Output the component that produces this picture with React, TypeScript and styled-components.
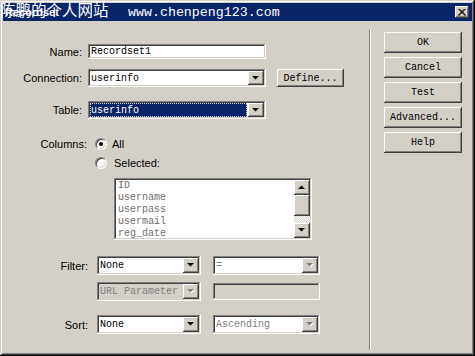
import React from 'react';
import styled, { createGlobalStyle } from 'styled-components';

const GlobalStyle = createGlobalStyle`
  html, body {
    margin: 0;
    padding: 0;
    background: #d4d0c8;
  }
  body {
    width: 475px;
    height: 356px;
    overflow: hidden;
  }
`;

const raised = `
  box-shadow: inset -1px -1px #404040, inset 1px 1px #ffffff,
    inset -2px -2px #808080, inset 2px 2px #d4d0c8;
`;

const sunken = `
  box-shadow: inset -1px -1px #ffffff, inset 1px 1px #808080,
    inset -2px -2px #d4d0c8, inset 2px 2px #404040;
`;

const mono = `"Liberation Mono", "Courier New", monospace`;

const Window = styled.div`
  position: relative;
  box-sizing: border-box;
  width: 475px;
  height: 356px;
  padding: 3px;
  display: flex;
  flex-direction: column;
  background: #d4d0c8;
  box-shadow: inset -1px -1px #000000, inset 1px 1px #d4d0c8,
    inset -2px -2px #404040, inset 2px 2px #ffffff, inset -3px -3px #808080;
  font-family: "Liberation Sans", Arial, sans-serif;
  font-size: 11px;
  color: #000;
`;

const TitleBar = styled.div`
  height: 18px;
  flex-shrink: 0;
  display: flex;
  align-items: center;
  justify-content: space-between;
  padding: 0 3px 0 2px;
  background: #0a246a;
  color: #fff;
  font-weight: 700;
  font-size: 11px;
`;

const Watermark = styled.div`
  position: absolute;
  top: 0;
  left: 0;
  height: 19px;
  color: #fff;
  white-space: pre;
  display: flex;
  align-items: baseline;
  pointer-events: none;
`;

const WatermarkCn = styled.span`
  font-family: "Noto Sans CJK SC", sans-serif;
  font-size: 15.5px;
  line-height: 18px;
  width: 128px;
`;

const WatermarkUrl = styled.span`
  font-family: ${mono};
  font-size: 13.3px;
  line-height: 18px;
`;

const CloseButton = styled.div`
  width: 14px;
  height: 12px;
  background: #d4d0c8;
  display: flex;
  align-items: center;
  justify-content: center;
  ${raised}
`;

const Content = styled.div`
  flex: 1;
  display: flex;
`;

const FormPanel = styled.div`
  width: 366px;
  display: flex;
  flex-direction: column;
`;

const Separator = styled.div`
  width: 0;
  margin: 9px 0 3px;
  border-left: 1px solid #808080;
  border-right: 1px solid #ffffff;
`;

const ButtonPanel = styled.div`
  flex: 1;
  display: flex;
  flex-direction: column;
  gap: 4px;
  padding: 11px 0 0 13px;
`;

const PushButton = styled.div<{ $w?: number; $h?: number }>`
  box-sizing: border-box;
  width: ${(p) => p.$w ?? 78}px;
  height: ${(p) => p.$h ?? 21}px;
  flex-shrink: 0;
  display: flex;
  align-items: center;
  justify-content: center;
  background: #d4d0c8;
  font-family: ${mono};
  font-size: 10px;
  ${raised}
`;

const Row = styled.div<{ $top: number; $h: number }>`
  display: flex;
  align-items: center;
  margin-top: ${(p) => p.$top}px;
  height: ${(p) => p.$h}px;
  flex-shrink: 0;
`;

const Label = styled.div<{ $w: number; $gap: number }>`
  width: ${(p) => p.$w}px;
  margin-right: ${(p) => p.$gap}px;
  flex-shrink: 0;
  text-align: right;
`;

const Field = styled.div<{ $w: number; $disabled?: boolean }>`
  box-sizing: border-box;
  width: ${(p) => p.$w}px;
  height: 100%;
  flex-shrink: 0;
  display: flex;
  padding: 2px;
  background: ${(p) => (p.$disabled ? '#d4d0c8' : '#ffffff')};
  ${sunken}
`;

const Value = styled.div<{ $muted?: boolean; $selected?: boolean }>`
  flex: 1;
  display: flex;
  align-items: center;
  padding-left: 1px;
  margin-right: ${(p) => (p.$selected ? 1 : 0)}px;
  font-family: ${mono};
  font-size: 10px;
  white-space: pre;
  color: ${(p) => (p.$selected ? '#ffffff' : p.$muted ? '#808080' : '#000000')};
  background: ${(p) => (p.$selected ? '#0a246a' : 'transparent')};
  outline: ${(p) => (p.$selected ? '1px dotted #d4d0c8' : 'none')};
  outline-offset: -1px;
`;

const ArrowBox = styled.div<{ $h?: number }>`
  box-sizing: border-box;
  width: 16px;
  height: ${(p) => (p.$h ? `${p.$h}px` : 'auto')};
  flex-shrink: 0;
  display: flex;
  align-items: center;
  justify-content: center;
  background: #d4d0c8;
  ${raised}
`;

const Spacer = styled.div<{ $w: number }>`
  width: ${(p) => p.$w}px;
  flex-shrink: 0;
`;

const RadioCircle = styled.div<{ $checked?: boolean }>`
  box-sizing: border-box;
  width: 12px;
  height: 12px;
  flex-shrink: 0;
  border-radius: 50%;
  border: 1px solid;
  border-color: #808080 #ffffff #ffffff #808080;
  background: #ffffff;
  box-shadow: inset 1px 1px #404040, inset -1px -1px #d4d0c8;
  display: flex;
  align-items: center;
  justify-content: center;

  &::after {
    content: '';
    display: ${(p) => (p.$checked ? 'block' : 'none')};
    width: 4px;
    height: 4px;
    border-radius: 50%;
    background: #000;
  }
`;

const RadioText = styled.span<{ $gap: number }>`
  margin-left: ${(p) => p.$gap}px;
`;

const ListBox = styled.div`
  box-sizing: border-box;
  margin-left: 111px;
  width: 198px;
  height: 100%;
  display: flex;
  padding: 2px;
  background: #ffffff;
  ${sunken}
`;

const ListItems = styled.div`
  flex: 1;
  padding-left: 2px;
  overflow: hidden;
  font-family: ${mono};
  font-size: 10px;
  color: #707070;
`;

const ListItem = styled.div`
  height: 12px;
  line-height: 12px;
`;

const ScrollBar = styled.div`
  width: 16px;
  display: flex;
  flex-direction: column;
`;

const ScrollThumb = styled.div`
  height: 21px;
  background: #d4d0c8;
  ${raised}
`;

const ScrollTrack = styled.div`
  flex: 1;
  background-color: #ffffff;
  background-image: linear-gradient(45deg, #d4d0c8 25%, transparent 25%, transparent 75%, #d4d0c8 75%),
    linear-gradient(45deg, #d4d0c8 25%, transparent 25%, transparent 75%, #d4d0c8 75%);
  background-size: 2px 2px;
  background-position: 0 0, 1px 1px;
`;

const Arrow = ({ up, disabled }: { up?: boolean; disabled?: boolean }) => (
  <svg width="8" height="5" viewBox="0 0 8 5">
    {disabled && <polygon points={up ? '1,5 8,5 4.5,1.5' : '1,1 8,1 4.5,4.5'} fill="#ffffff" />}
    <polygon
      points={up ? '0,4 7,4 3.5,0.5' : '0,0 7,0 3.5,3.5'}
      fill={disabled ? '#808080' : '#000000'}
    />
  </svg>
);

type ComboProps = {
  w: number;
  value: string;
  muted?: boolean;
  disabled?: boolean;
  selected?: boolean;
  arrowDisabled?: boolean;
};

const Combo = ({ w, value, muted, disabled, selected, arrowDisabled }: ComboProps) => (
  <Field $w={w} $disabled={disabled}>
    <Value $muted={muted} $selected={selected}>
      {value}
    </Value>
    <ArrowBox>
      <Arrow disabled={arrowDisabled} />
    </ArrowBox>
  </Field>
);

const Radio = ({ checked, text, gap }: { checked?: boolean; text: string; gap: number }) => (
  <>
    <RadioCircle $checked={checked} />
    <RadioText $gap={gap}>{text}</RadioText>
  </>
);

const columns = ['ID', 'username', 'userpass', 'usermail', 'reg_date'];

const App = () => {
  return (
    <>
      <GlobalStyle />
      <Window>
        <TitleBar>
          <span>Recordset</span>
          <CloseButton>
            <svg width="8" height="7" viewBox="0 0 8 7">
              <path d="M0.5 0 L7.5 7 M7.5 0 L0.5 7 M1.5 0 L8 6.5 M6.5 0 L0 6.5" stroke="#000" strokeWidth="1" />
            </svg>
          </CloseButton>
        </TitleBar>
        <Watermark>
          <WatermarkCn>陈鹏的个人网站</WatermarkCn>
          <WatermarkUrl>www.chenpeng123.com</WatermarkUrl>
        </Watermark>

        <Content>
          <FormPanel>
            <Row $top={23} $h={15}>
              <Label $w={79} $gap={6}>Name:</Label>
              <Field $w={178}>
                <Value>Recordset1</Value>
              </Field>
            </Row>

            <Row $top={10} $h={18}>
              <Label $w={79} $gap={6}>Connection:</Label>
              <Combo w={178} value="userinfo" />
              <Spacer $w={11} />
              <PushButton $w={67} $h={18}>Define...</PushButton>
            </Row>

            <Row $top={14} $h={18}>
              <Label $w={79} $gap={6}>Table:</Label>
              <Combo w={178} value="userinfo" selected />
            </Row>

            <Row $top={18} $h={14}>
              <Label $w={84} $gap={8}>Columns:</Label>
              <Radio checked text="All" gap={5} />
            </Row>
            <Row $top={5} $h={14}>
              <Spacer $w={92} />
              <Radio text="Selected:" gap={7} />
            </Row>

            <Row $top={8} $h={62}>
              <ListBox>
                <ListItems>
                  {columns.map((c) => (
                    <ListItem key={c}>{c}</ListItem>
                  ))}
                </ListItems>
                <ScrollBar>
                  <ArrowBox $h={15}>
                    <Arrow up />
                  </ArrowBox>
                  <ScrollThumb />
                  <ScrollTrack />
                  <ArrowBox $h={15}>
                    <Arrow />
                  </ArrowBox>
                </ScrollBar>
              </ListBox>
            </Row>

            <Row $top={16} $h={19}>
              <Label $w={85} $gap={9}>Filter:</Label>
              <Combo w={104} value="None" />
              <Spacer $w={12} />
              <Combo w={107} value="=" muted arrowDisabled />
            </Row>

            <Row $top={7} $h={19}>
              <Spacer $w={94} />
              <Combo w={104} value="URL Parameter" muted disabled arrowDisabled />
              <Spacer $w={12} />
              <Field $w={107} $disabled style={{ height: 17 }} />
            </Row>

            <Row $top={14} $h={19}>
              <Label $w={85} $gap={9}>Sort:</Label>
              <Combo w={104} value="None" />
              <Spacer $w={12} />
              <Combo w={107} value="Ascending" muted arrowDisabled />
            </Row>
          </FormPanel>

          <Separator />

          <ButtonPanel>
            <PushButton>OK</PushButton>
            <PushButton>Cancel</PushButton>
            <PushButton>Test</PushButton>
            <PushButton>Advanced...</PushButton>
            <PushButton>Help</PushButton>
          </ButtonPanel>
        </Content>
      </Window>
    </>
  );
};

export default App;
